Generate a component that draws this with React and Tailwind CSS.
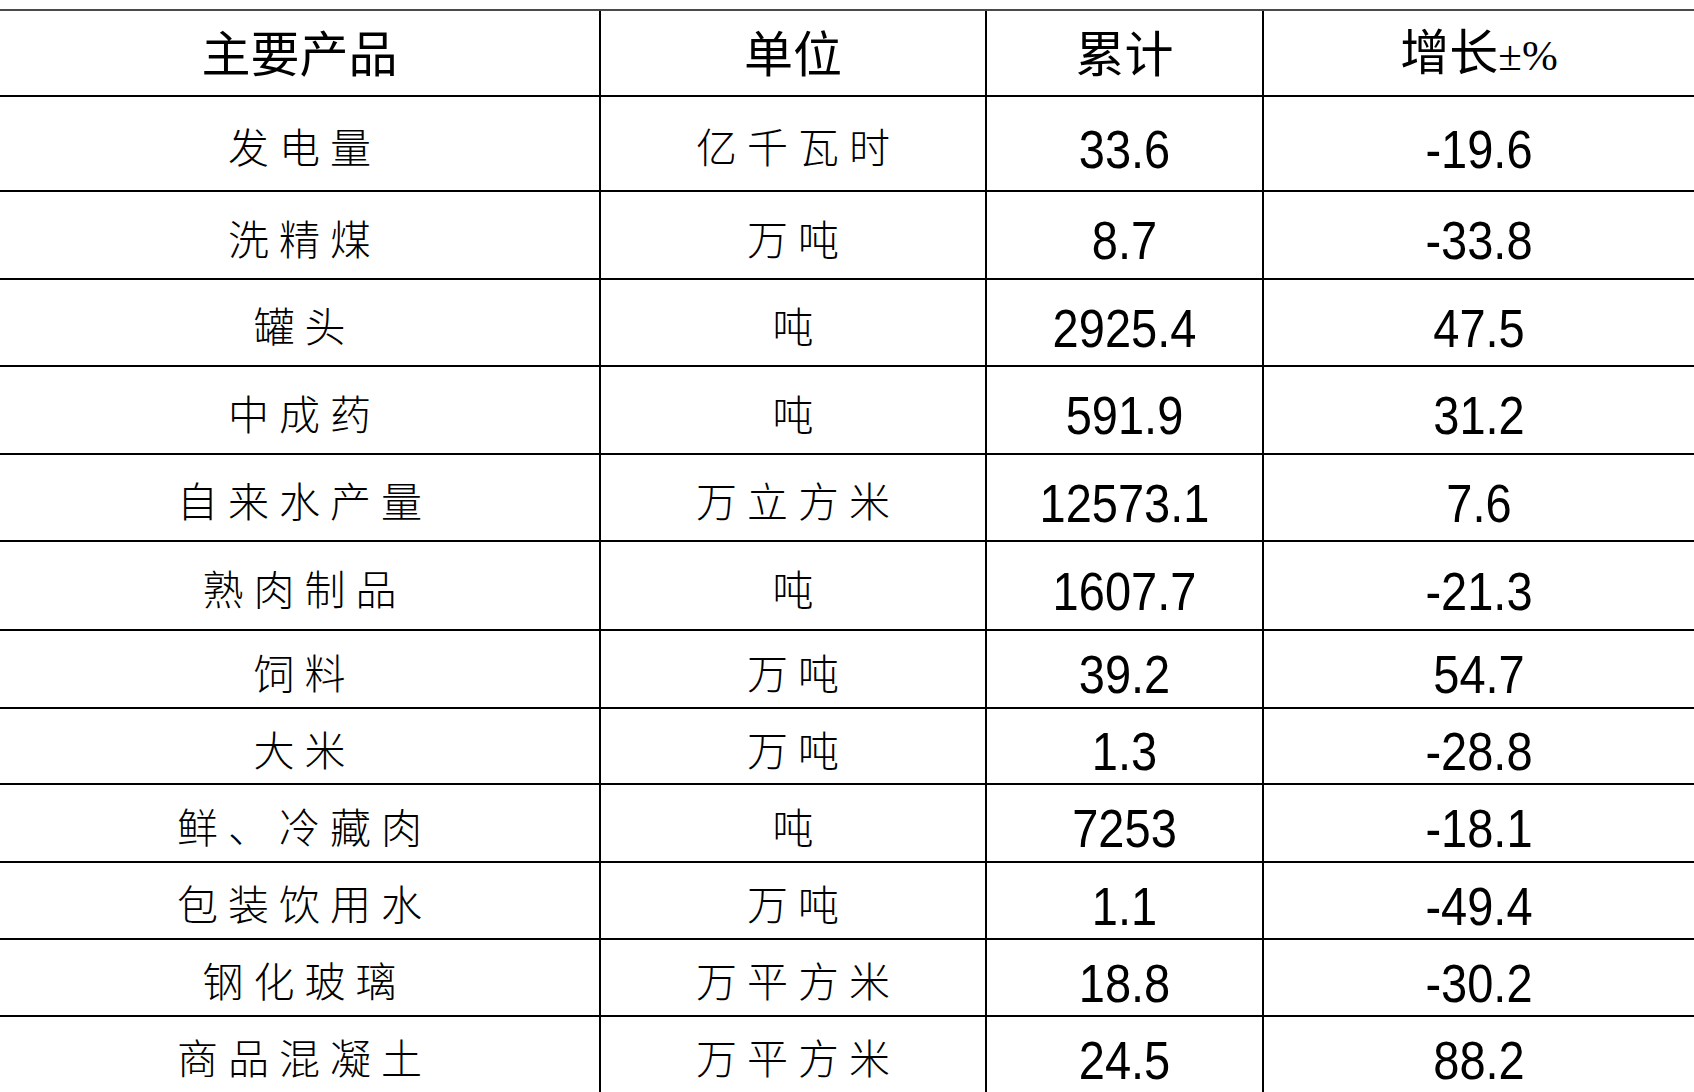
import React from 'react';

const rows = [
  { name: '发电量', unit: '亿千瓦时', total: '33.6', growth: '-19.6', h: 'h-[95px]' },
  { name: '洗精煤', unit: '万吨', total: '8.7', growth: '-33.8', h: 'h-[88px]' },
  { name: '罐头', unit: '吨', total: '2925.4', growth: '47.5', h: 'h-[87px]' },
  { name: '中成药', unit: '吨', total: '591.9', growth: '31.2', h: 'h-[88px]' },
  { name: '自来水产量', unit: '万立方米', total: '12573.1', growth: '7.6', h: 'h-[87px]' },
  { name: '熟肉制品', unit: '吨', total: '1607.7', growth: '-21.3', h: 'h-[89px]' },
  { name: '饲料', unit: '万吨', total: '39.2', growth: '54.7', h: 'h-[78px]' },
  { name: '大米', unit: '万吨', total: '1.3', growth: '-28.8', h: 'h-[76px]' },
  { name: '鲜、冷藏肉', unit: '吨', total: '7253', growth: '-18.1', h: 'h-[78px]' },
  { name: '包装饮用水', unit: '万吨', total: '1.1', growth: '-49.4', h: 'h-[77px]' },
  { name: '钢化玻璃', unit: '万平方米', total: '18.8', growth: '-30.2', h: 'h-[77px]' },
  { name: '商品混凝土', unit: '万平方米', total: '24.5', growth: '88.2', h: 'h-[76px]' },
];

const grid = 'grid grid-cols-[601px_386px_277px_1fr]';
const cjk = "font-['Noto_Sans_CJK_SC','Noto_Sans',sans-serif]";

const Head = ({ children, last }) => (
  <div className={`flex items-center justify-center pb-[6px] ${last ? '' : 'border-r-2 border-black'}`}>
    <span className={`${cjk} font-normal text-[49px] leading-none text-black`}>{children}</span>
  </div>
);

const Cjk = ({ text }) => (
  <span className={`${cjk} font-light text-[41px] tracking-[10px] pl-[10px] leading-none text-black`}>{text}</span>
);

const Num = ({ text }) => (
  <span className="inline-block font-['Liberation_Sans',Arial,sans-serif] text-[47px] leading-none text-black scale-y-[1.14] pt-[9px]">
    {text}
  </span>
);

const App = () => {
  return (
    <div className="w-[1694px] h-[1092px] overflow-hidden bg-white pt-[9px]">
      <div className="border-t-2 border-[#4a4a4a]">
        {/* header */}
        <div className={`${grid} h-[86px] border-b-2 border-black`}>
          <Head>主要产品</Head>
          <Head>单位</Head>
          <Head>累计</Head>
          <Head last>
            增长<span className="font-['Liberation_Serif','Times_New_Roman',serif] text-[43px]">±%</span>
          </Head>
        </div>

        {rows.map((r, i) => (
          <div
            key={r.name}
            className={`${grid} ${r.h} ${i === rows.length - 1 ? 'border-b border-[#d4d4d4]' : 'border-b-2 border-black'}`}
          >
            <div className="flex items-center justify-center border-r-2 border-black pt-[4px]">
              <Cjk text={r.name} />
            </div>
            <div className="flex items-center justify-center border-r-2 border-black pt-[4px]">
              <Cjk text={r.unit} />
            </div>
            <div className="flex items-center justify-center border-r-2 border-black">
              <Num text={r.total} />
            </div>
            <div className="flex items-center justify-center">
              <Num text={r.growth} />
            </div>
          </div>
        ))}
      </div>
    </div>
  );
};

export default App;
